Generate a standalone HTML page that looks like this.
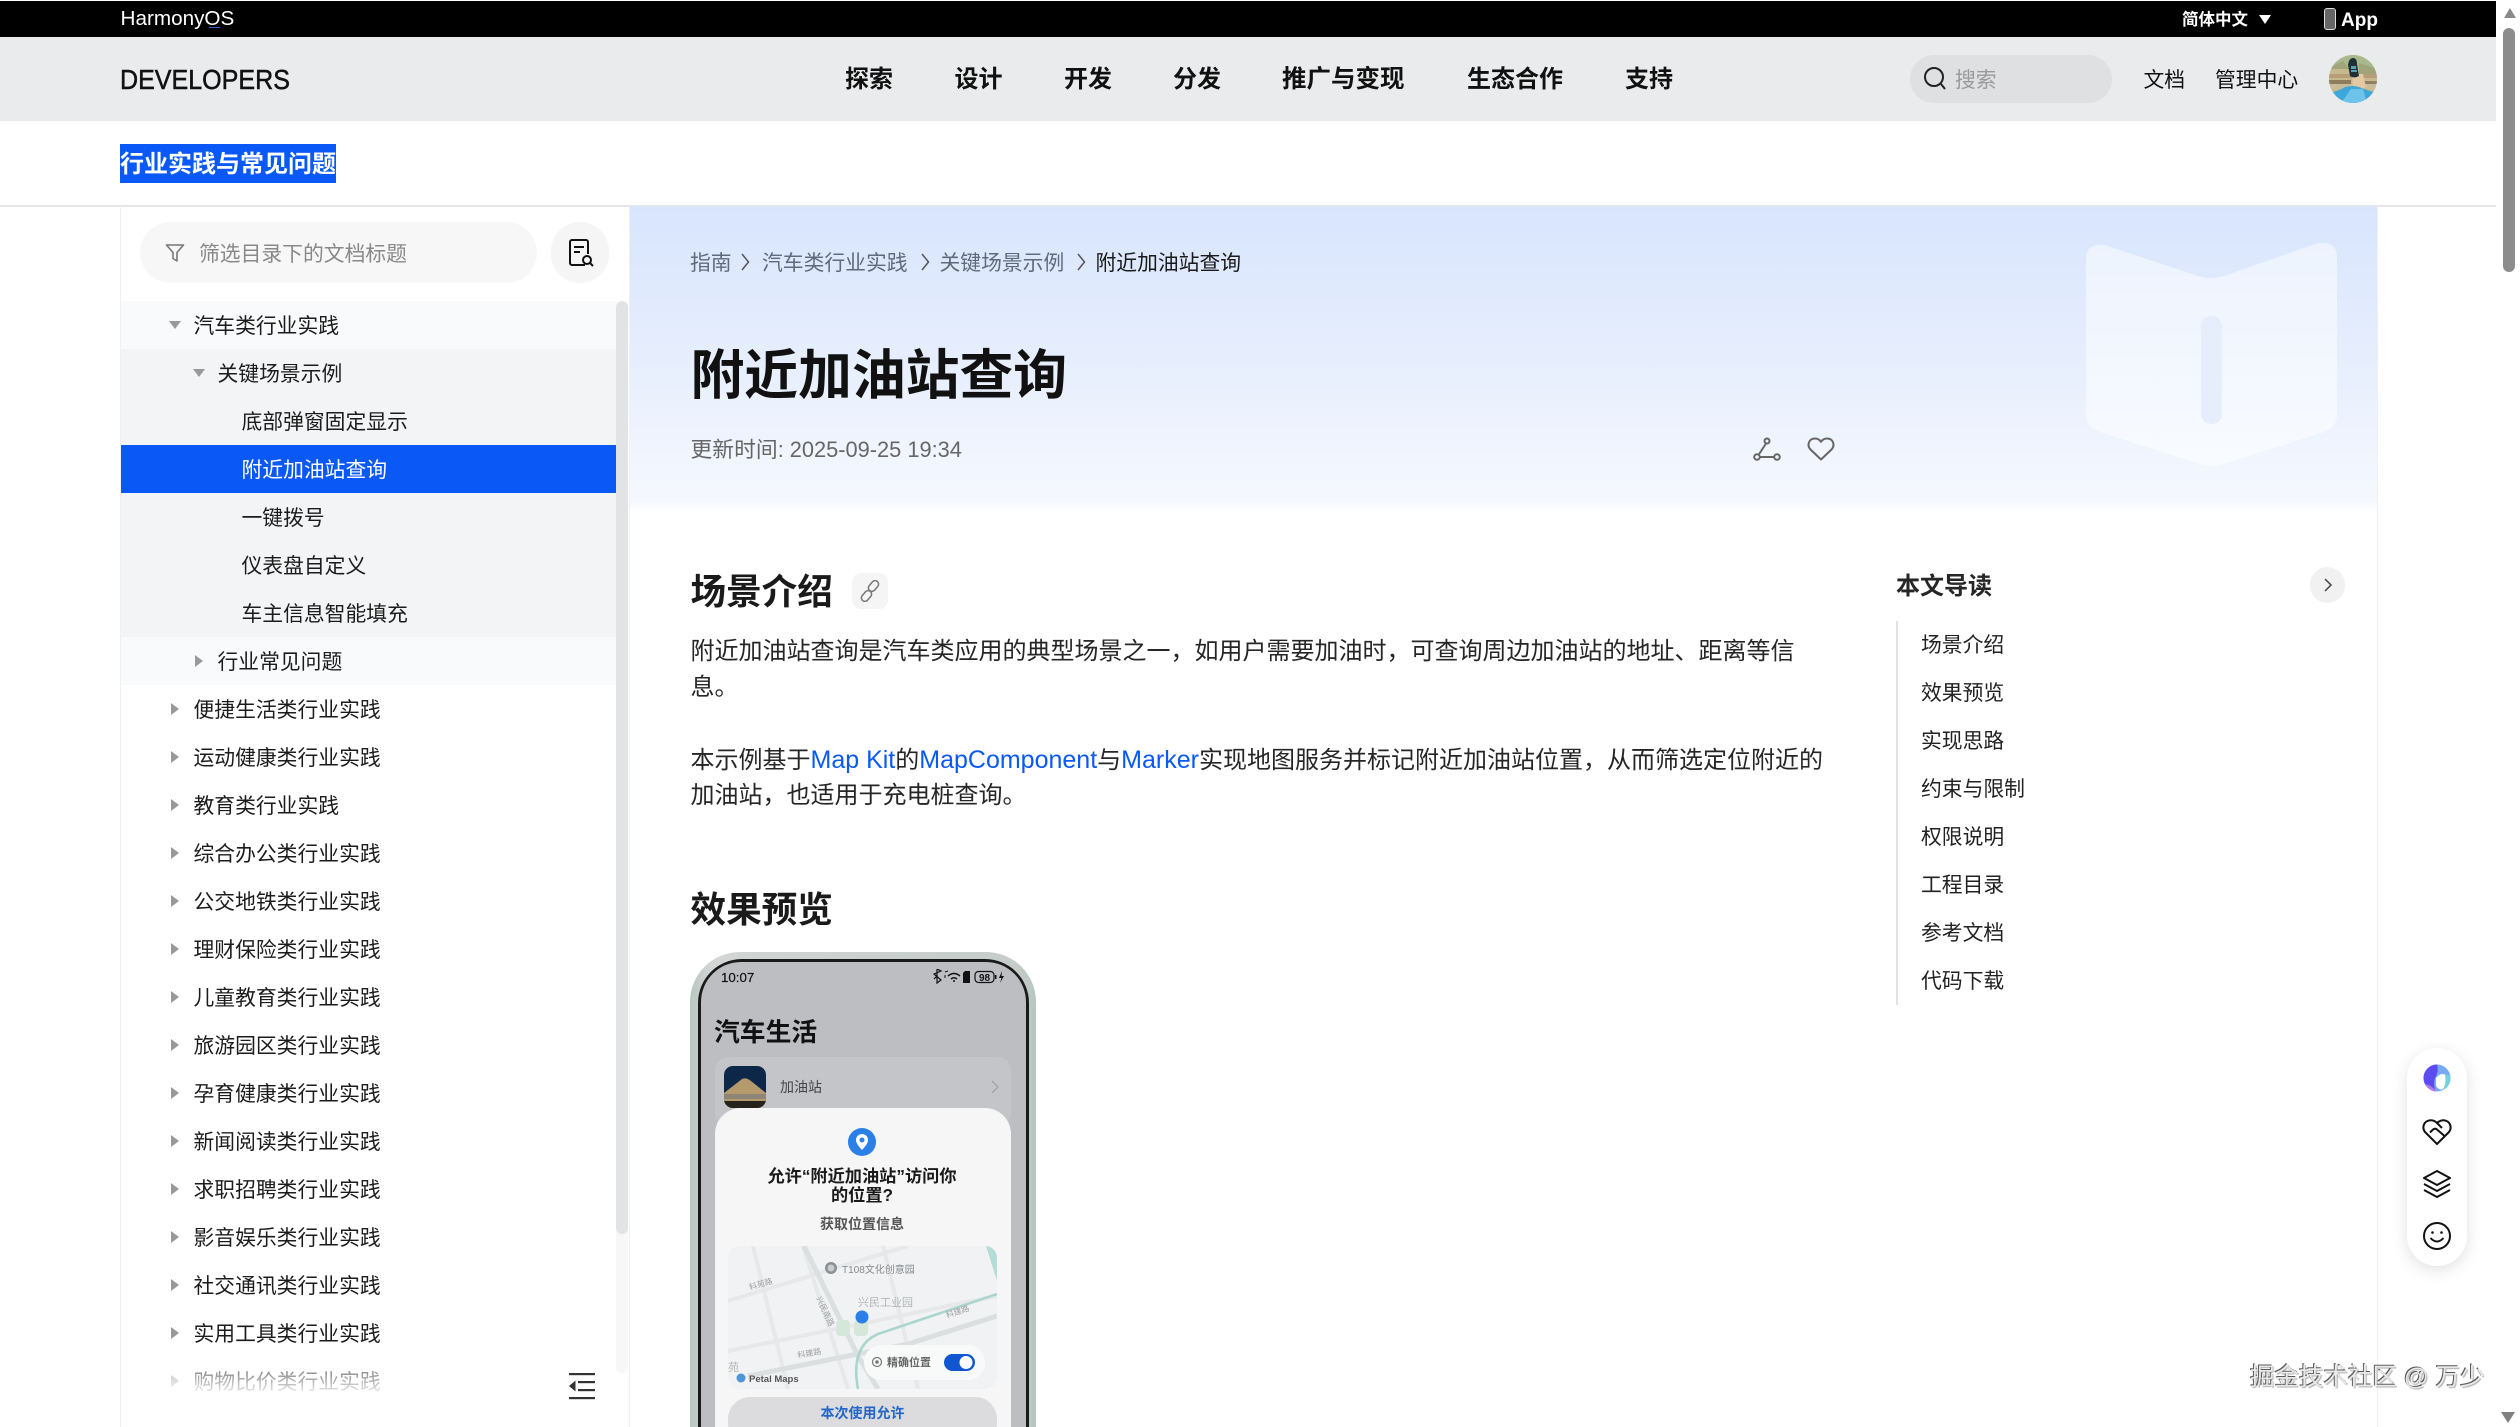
<!DOCTYPE html>
<html lang="zh-CN">
<head>
<meta charset="utf-8">
<title>附近加油站查询</title>
<style>
html,body{margin:0;padding:0;background:#fff;width:2520px;height:1427px;overflow:hidden}
body{position:relative;font-family:"Liberation Sans","Noto Sans CJK SC",sans-serif;color:#1a1a1a}
.a{position:absolute}
.t{position:absolute;white-space:nowrap;line-height:1}
.b{font-weight:700}
.nav{top:68px;font-size:24px;font-weight:700;color:#111}
.r{position:absolute;left:121px;width:495px;height:48px;line-height:48px;font-size:20.8px;color:#1c1c1c;white-space:nowrap}
.r span{position:absolute;top:1.5px}
.l1 span{left:72.5px}.l2 span{left:96.500px}.l3 span{left:120.500px}
.dn,.rt{position:absolute;width:0;height:0}
.dn{border-left:6px solid transparent;border-right:6px solid transparent;border-top:8.500px solid #999}
.rt{border-top:6.500px solid transparent;border-bottom:6.500px solid transparent;border-left:8px solid #999}
.l1 .dn{left:48px;top:20px}.l2 .dn{left:72px;top:20px}
.l1 .rt{left:50px;top:18px}.l2 .rt{left:74px;top:18px}
.toc{left:1921px;font-size:20.8px;color:#222}
.bc{top:254px;font-size:20.8px;color:#5f6b7d}
.p{left:690.500px;font-size:24px;color:#262626}
.p a{color:#0a59f7;text-decoration:none;font-size:25px}
.h2{left:690.500px;font-size:35.600px;font-weight:700;color:#1a1a1a}
</style>
</head>
<body>
<!-- top black bar -->
<div class="a" style="left:0;top:1px;width:2496px;height:36px;background:#000"></div>
<div class="t" style="left:120.500px;top:9px;font-size:20.700px;color:#fff">HarmonyOS</div>
<div class="a" style="left:209px;top:27px;width:11px;height:1px;background:#3a5fd0"></div>
<div class="t b" style="left:2182px;top:12px;font-size:16.500px;color:#fff">简体中文</div>
<div class="a" style="left:2259px;top:15px;width:0;height:0;border-left:6px solid transparent;border-right:6px solid transparent;border-top:9.500px solid #fff"></div>
<div class="a" style="left:2324px;top:8px;width:10px;height:20px;border:1.500px solid #ddd;border-radius:3px;background:#666"></div>
<div class="t b" style="left:2341px;top:11px;font-size:19px;color:#fff">App</div>

<!-- header -->
<div class="a" style="left:0;top:37px;width:2496px;height:84px;background:#e9ebec"></div>
<div class="t" style="left:120px;top:66px;font-size:28px;color:#111;transform:scaleX(.895);transform-origin:left;-webkit-text-stroke:.5px #111">DEVELOPERS</div>
<div class="t nav" style="left:845px">探索</div>
<div class="t nav" style="left:954.500px">设计</div>
<div class="t nav" style="left:1064px">开发</div>
<div class="t nav" style="left:1173px">分发</div>
<div class="t nav" style="left:1282px;font-size:24.500px">推广与变现</div>
<div class="t nav" style="left:1467px">生态合作</div>
<div class="t nav" style="left:1625px">支持</div>
<div class="a" style="left:1909.500px;top:55px;width:202.500px;height:48px;border-radius:24px;background:#dfe0e2"></div>
<svg class="a" style="left:1923px;top:66px" width="24" height="26" viewBox="0 0 24 26" fill="none" stroke="#222" stroke-width="2"><circle cx="11" cy="11" r="9"/><path d="M18 18l4 5"/></svg>
<div class="t" style="left:1955px;top:71px;font-size:20.8px;color:#9a9a9a">搜索</div>
<div class="t" style="left:2143.500px;top:71px;font-size:20.8px;color:#111">文档</div>
<div class="t" style="left:2215px;top:71px;font-size:20.8px;color:#111">管理中心</div>
<svg class="a" style="left:2329px;top:55px" width="48" height="48" viewBox="0 0 48 48">
<defs><clipPath id="av"><circle cx="24" cy="24" r="24"/></clipPath></defs>
<g clip-path="url(#av)">
<rect width="48" height="48" fill="#c6b98e"/>
<rect width="48" height="13" fill="#a9b98d"/>
<path d="M0 13L14 6 20 14H0ZM30 8L48 14V20H30Z" fill="#9fa578"/>
<rect y="19" width="48" height="4" fill="#b59e78"/>
<rect y="25" width="22" height="4" fill="#8e7c5c"/>
<rect x="32" y="26" width="16" height="3" fill="#8e8062"/>
<rect y="29" width="48" height="5" fill="#c9bb96"/>
<path d="M23 19H34L37 32Q30 36 24 33Z" fill="#e3c8a2"/>
<path d="M19 10Q20 3 24 3Q28 3 28 9L30 21Q25 24 21 21Z" fill="#1f3038"/>
<path d="M22 11h5v3h-5zM22 15h6v2h-6z" fill="#5aa0ad"/>
<path d="M0 38Q10 36 16 32Q24 30 30 32Q40 36 48 38V48H0Z" fill="#3da7dc"/>
<path d="M12 48L22 34 34 34 38 48Z" fill="#6cc4ea"/>
</g></svg>

<!-- sub header -->
<div class="a" style="left:0;top:205px;width:2496px;height:1.500px;background:#e6e6e6"></div>
<div class="a" style="left:120px;top:144px;width:216px;height:39px;background:#0a59f7"></div>
<div class="t b" style="left:120px;top:153px;font-size:24px;color:#fff">行业实践与常见问题</div>

<!-- sidebar -->
<div class="a" style="left:120px;top:206px;width:1px;height:1221px;background:#f0f0f0"></div>
<div class="a" style="left:628.500px;top:206px;width:1px;height:1221px;background:#f0f0f0"></div>
<div class="a" style="left:140px;top:222px;width:397px;height:61px;border-radius:31px;background:#f7f7f7"></div>
<svg class="a" style="left:165px;top:243px" width="20" height="20" viewBox="0 0 20 20" fill="none" stroke="#777" stroke-width="1.600" stroke-linejoin="round"><path d="M1.500 2h17l-6.500 7.500V18l-4-2.500V9.500z"/></svg>
<div class="t" style="left:199px;top:244.500px;font-size:20.8px;color:#888">筛选目录下的文档标题</div>
<div class="a" style="left:551px;top:222px;width:58px;height:61px;border-radius:30px;background:#f5f5f5"></div>
<svg class="a" style="left:568px;top:238px" width="26" height="30" viewBox="0 0 26 30" fill="none" stroke="#111" stroke-width="2"><path d="M17 27H4a2 2 0 0 1-2-2V4a2 2 0 0 1 2-2h14a2 2 0 0 1 2 2v12"/><path d="M6 9h10M6 14h6"/><circle cx="19" cy="22" r="4"/><path d="M22 25l3 3"/></svg>

<div class="a" style="left:121px;top:301px;width:495px;height:384px;background:#f9fafb"></div>
<div class="a" style="left:121px;top:349px;width:495px;height:288px;background:#f3f4f6"></div>
<div class="a" style="left:121px;top:445px;width:495px;height:48px;background:#0a59f7"></div>
<div class="a" style="left:616px;top:301px;width:12px;height:1072px;background:#f7f7f7;border-radius:6px"></div>
<div class="a" style="left:616px;top:301px;width:12px;height:933px;background:#e2e3e4;border-radius:6px"></div>

<div class="r l1" style="top:301px"><i class="dn"></i><span>汽车类行业实践</span></div>
<div class="r l2" style="top:349px"><i class="dn"></i><span>关键场景示例</span></div>
<div class="r l3" style="top:397px"><span>底部弹窗固定显示</span></div>
<div class="r l3" style="top:445px;color:#fff"><span>附近加油站查询</span></div>
<div class="r l3" style="top:493px"><span>一键拨号</span></div>
<div class="r l3" style="top:541px"><span>仪表盘自定义</span></div>
<div class="r l3" style="top:589px"><span>车主信息智能填充</span></div>
<div class="r l2" style="top:637px"><i class="rt"></i><span>行业常见问题</span></div>
<div class="r l1" style="top:685px"><i class="rt"></i><span>便捷生活类行业实践</span></div>
<div class="r l1" style="top:733px"><i class="rt"></i><span>运动健康类行业实践</span></div>
<div class="r l1" style="top:781px"><i class="rt"></i><span>教育类行业实践</span></div>
<div class="r l1" style="top:829px"><i class="rt"></i><span>综合办公类行业实践</span></div>
<div class="r l1" style="top:877px"><i class="rt"></i><span>公交地铁类行业实践</span></div>
<div class="r l1" style="top:925px"><i class="rt"></i><span>理财保险类行业实践</span></div>
<div class="r l1" style="top:973px"><i class="rt"></i><span>儿童教育类行业实践</span></div>
<div class="r l1" style="top:1021px"><i class="rt"></i><span>旅游园区类行业实践</span></div>
<div class="r l1" style="top:1069px"><i class="rt"></i><span>孕育健康类行业实践</span></div>
<div class="r l1" style="top:1117px"><i class="rt"></i><span>新闻阅读类行业实践</span></div>
<div class="r l1" style="top:1165px"><i class="rt"></i><span>求职招聘类行业实践</span></div>
<div class="r l1" style="top:1213px"><i class="rt"></i><span>影音娱乐类行业实践</span></div>
<div class="r l1" style="top:1261px"><i class="rt"></i><span>社交通讯类行业实践</span></div>
<div class="r l1" style="top:1309px"><i class="rt"></i><span>实用工具类行业实践</span></div>
<div class="r l1" style="top:1357px"><i class="rt"></i><span>购物比价类行业实践</span></div>
<div class="a" style="left:121px;top:1357px;width:495px;height:42px;background:linear-gradient(rgba(255,255,255,.25),rgba(255,255,255,.65) 55%,#fff 95%)"></div>
<svg class="a" style="left:569px;top:1373px" width="27" height="27" viewBox="0 0 27 27" fill="#333"><rect x="0" y="0" width="26" height="2.200"/><rect x="0" y="24" width="26" height="2.200"/><rect x="9" y="8" width="17" height="2.200"/><rect x="9" y="16" width="17" height="2.200"/><path d="M6.500 7.500v11L0 13z"/></svg>

<!-- hero -->
<div class="a" style="left:630px;top:206px;width:1747px;height:306px;background:linear-gradient(#d8e5fd 0,#e6eefd 150px,#f5f8fe 295px,#fff 306px)"></div>
<svg class="a" style="left:2086px;top:243px" width="251" height="224" viewBox="0 0 251 224">
<defs><linearGradient id="bk" x1="0" y1="0" x2="0" y2="1"><stop offset="0" stop-color="#edf3fe"/><stop offset="1" stop-color="#f8fbff"/></linearGradient></defs>
<path d="M0 16Q0 0 18 2L112 33Q125 37 138 33L232 0Q251 -2 251 15V172Q251 184 238 189L138 221Q125 225 113 221L14 189Q0 184 0 172Z" fill="url(#bk)"/>
<rect x="115" y="73" width="21" height="108" rx="10" fill="#e6eefc"/>
</svg>
<div class="a" style="left:2376.500px;top:206px;width:1px;height:1221px;background:#f0f0f0"></div>

<div class="t bc" style="left:690px">指南</div>
<div class="t bc" style="left:762px">汽车类行业实践</div>
<div class="t bc" style="left:939.500px">关键场景示例</div>
<div class="t bc" style="left:1095.500px;color:#1a1a1a">附近加油站查询</div>
<svg class="a" style="left:740px;top:252px" width="350" height="20" viewBox="0 0 350 20" fill="none" stroke="#555" stroke-width="1.500"><path d="M2 2l6.500 8-6.500 8M182 2l6.500 8-6.500 8M338 2l6.500 8-6.500 8"/></svg>

<div class="t b" style="left:690.500px;top:350px;font-size:53.800px;color:#111">附近加油站查询</div>
<div class="t" style="left:690.500px;top:438.500px;font-size:21.800px;color:#666">更新时间: 2025-09-25 19:34</div>
<svg class="a" style="left:1752px;top:436px" width="30" height="26" viewBox="0 0 30 26" fill="none" stroke="#666" stroke-width="2"><circle cx="15" cy="5" r="2.500"/><path d="M14 7.500L6.500 19"/><circle cx="5" cy="21" r="2.800"/><circle cx="25" cy="21" r="2.800"/><path d="M8 21h14"/></svg>
<svg class="a" style="left:1807px;top:437px" width="28" height="24" viewBox="0 0 28 24" fill="none" stroke="#666" stroke-width="2" stroke-linejoin="round"><path d="M14 22.500L3.500 12.500C-.5 8 2 1.500 8 1.500c2.700 0 4.700 1.200 6 3.300 1.300-2.100 3.300-3.300 6-3.300 6 0 8.500 6.500 4.500 11z"/></svg>

<!-- article -->
<div class="t h2" style="top:575px">场景介绍</div>
<div class="a" style="left:852px;top:573px;width:36px;height:36px;border-radius:9px;background:#f5f5f5"></div>
<svg class="a" style="left:859px;top:580px" width="22" height="22" viewBox="0 0 22 22" fill="none" stroke="#777" stroke-width="1.500"><rect x="11" y="0" width="7" height="12" rx="3.500" transform="rotate(40 14.500 6)"/><rect x="4" y="10" width="7" height="12" rx="3.500" transform="rotate(40 7.500 16)"/></svg>
<div class="t p" style="top:640px">附近加油站查询是汽车类应用的典型场景之一，如用户需要加油时，可查询周边加油站的地址、距离等信</div>
<div class="t p" style="top:676px">息。</div>
<div class="t p" style="top:747.500px">本示例基于<a>Map Kit</a>的<a>MapComponent</a>与<a>Marker</a>实现地图服务并标记附近加油站位置，从而筛选定位附近的</div>
<div class="t p" style="top:783.500px">加油站，也适用于充电桩查询。</div>
<div class="t h2" style="top:893px">效果预览</div>

<!-- phone -->
<div class="a" style="left:690px;top:952px;width:346px;height:500px;border-radius:50px 50px 0 0;background:linear-gradient(90deg,#b9c6c0,#d2d6d4 6%,#c6ccca 94%,#b9c6c0);"></div>
<div class="a" style="left:698px;top:959px;width:331px;height:494px;border-radius:44px 44px 0 0;background:#1a1a1a"></div>
<div class="a" style="left:701px;top:962px;width:325px;height:490px;border-radius:40px 40px 0 0;background:#bcbec2;overflow:hidden"></div>
<div class="t" style="left:721px;top:970.500px;font-size:13.300px;color:#111;-webkit-text-stroke:.2px #111">10:07</div>
<svg class="a" style="left:932px;top:969px" width="74" height="16" viewBox="0 0 74 16" fill="none" stroke="#111">
<path d="M5 2v12l4-3-7-6 7-3-4-2v2M2 10l3-3" stroke-width="1.200"/>
<path d="M16 7q6-5 12 0M19 10q3-2.500 6 0M21 12h2" stroke-width="1.500"/><path d="M13 3l3-1M13 6v3" stroke-width="1"/>
<path d="M31 4l2-2h5v12h-7z" fill="#111" stroke="none"/>
<rect x="43" y="2.500" width="19" height="11" rx="3.500" stroke-width="1.200"/><rect x="63" y="6" width="1.500" height="4" fill="#111" stroke="none"/>
<path d="M70 2l-3 7h2.500l-1.500 5 4-7h-2.500z" fill="#111" stroke="none"/>
<text x="52.500" y="12" font-size="10" font-weight="700" fill="#111" stroke="none" text-anchor="middle">98</text></svg>
<div class="t b" style="left:714px;top:1021px;font-size:25.800px;color:#111">汽车生活</div>
<div class="a" style="left:715px;top:1057px;width:296px;height:70px;border-radius:14px;background:#c4c5c8"></div>
<svg class="a" style="left:724px;top:1066px" width="42" height="42" viewBox="0 0 42 42"><defs><clipPath id="ic"><rect width="42" height="42" rx="9"/></clipPath></defs><g clip-path="url(#ic)"><rect width="42" height="42" fill="#0d2748"/><path d="M0 27L18 13Q22 11 27 15L42 27V42H0Z" fill="#b49a6d"/><rect y="28" width="42" height="5" fill="#8d8676"/><rect y="35" width="42" height="7" fill="#26221c"/></g></svg>
<div class="t" style="left:780px;top:1080px;font-size:14px;color:#444">加油站</div>
<svg class="a" style="left:990px;top:1079px" width="10" height="16" viewBox="0 0 10 16" fill="none" stroke="#a5a6a9" stroke-width="1.500"><path d="M2 2l6 6-6 6"/></svg>
<div class="a" style="left:715px;top:1108px;width:296px;height:340px;border-radius:26px 26px 0 0;background:#f6f6f7"></div>
<svg class="a" style="left:848px;top:1128px" width="28" height="28" viewBox="0 0 28 28"><circle cx="14" cy="14" r="14" fill="#2a80e6"/><path d="M14 22c-3-3.500-6-6.500-6-10a6 6 0 0 1 12 0c0 3.500-3 6.500-6 10z" fill="#fff"/><circle cx="14" cy="12" r="2.500" fill="#2a80e6"/></svg>
<div class="t b" style="left:742px;top:1167.500px;width:240px;text-align:center;font-size:17.200px;color:#1a1a1a">允许“附近加油站”访问你</div>
<div class="t b" style="left:742px;top:1187px;width:240px;text-align:center;font-size:17.200px;color:#1a1a1a">的位置?</div>
<div class="t" style="left:766px;top:1217px;width:192px;text-align:center;font-size:14px;font-weight:700;color:#555">获取位置信息</div>
<svg class="a" style="left:728px;top:1246px" width="269" height="143" viewBox="0 0 269 143">
<defs><clipPath id="mp"><rect width="269" height="143" rx="12"/></clipPath></defs>
<g clip-path="url(#mp)">
<rect width="269" height="143" fill="#f0f2f3"/>
<g fill="none" stroke="#e6e8e9" stroke-width="4">
<path d="M0 55L180 0"/><path d="M0 105L269 50"/><path d="M25 0L60 143"/><path d="M75 0L120 143"/><path d="M155 0L190 143"/>
</g>
<g fill="none" stroke="#dcdfe0" stroke-width="5"><path d="M76 0L130 110 L150 143"/><path d="M20 130L180 98 L269 70"/></g>
<path d="M130 143Q122 100 150 88L269 48" fill="none" stroke="#a9d5cd" stroke-width="2.500"/>
<path d="M258 0L269 35V0Z" fill="#b5dcd6"/>
<rect x="108" y="74" width="14" height="16" rx="4" fill="#d5e6db"/><rect x="126" y="74" width="14" height="16" rx="4" fill="#d5e6db"/>
<circle cx="134" cy="71" r="6.500" fill="#2a80e6"/>
<circle cx="103" cy="22" r="6" fill="#8c8f92"/><circle cx="103" cy="22" r="3.500" fill="#c9cbcd"/>
<text x="114" y="27" font-size="10" fill="#86898c">T108文化创意园</text>
<text x="130" y="60" font-size="11" fill="#b3b6b8">兴民工业园</text>
<text x="22" y="44" font-size="8" fill="#9ea1a3" transform="rotate(-16 22 44)">科苑路</text>
<text x="70" y="112" font-size="8" fill="#9ea1a3" transform="rotate(-10 70 112)">科建路</text>
<text x="219" y="72" font-size="8" fill="#9ea1a3" transform="rotate(-18 219 72)">科建路</text>
<text x="88" y="52" font-size="8" fill="#9ea1a3" transform="rotate(65 88 52)">兴民南路</text>
<text x="0" y="125" font-size="11" fill="#b3b6b8">苑</text>
<circle cx="13" cy="132" r="4.500" fill="#4b96d8"/>
<text x="21" y="136" font-size="9.500" font-weight="700" fill="#555">Petal Maps</text>
<rect x="136" y="99" width="121" height="35" rx="17" fill="#f8f9f9"/>
<circle cx="149" cy="116" r="4.500" fill="none" stroke="#777" stroke-width="1.200"/><circle cx="149" cy="116" r="1.800" fill="#777"/>
<text x="159" y="120" font-size="11" font-weight="700" fill="#666">精确位置</text>
<rect x="216" y="108" width="31" height="17" rx="8.500" fill="#0f56d0"/><circle cx="238" cy="116.500" r="6.500" fill="#fff"/>
</g></svg>
<div class="a" style="left:728px;top:1397px;width:269px;height:50px;border-radius:22px;background:#dcdcde"></div>
<div class="t b" style="left:728px;top:1406px;width:269px;text-align:center;font-size:14px;color:#2565c7">本次使用允许</div>

<!-- toc -->
<div class="t b" style="left:1896px;top:575px;font-size:24px;color:#262626">本文导读</div>
<div class="a" style="left:2310px;top:567px;width:35px;height:36px;border-radius:18px;background:#f1f1f1"></div>
<svg class="a" style="left:2322px;top:577px" width="12" height="16" viewBox="0 0 12 16" fill="none" stroke="#444" stroke-width="1.500"><path d="M3 2l6 6-6 6"/></svg>
<div class="a" style="left:1896px;top:621px;width:1.500px;height:384px;background:#e2e2e2"></div>
<div class="t toc" style="top:635.500px">场景介绍</div>
<div class="t toc" style="top:683.500px">效果预览</div>
<div class="t toc" style="top:731.500px">实现思路</div>
<div class="t toc" style="top:779.500px">约束与限制</div>
<div class="t toc" style="top:827.500px">权限说明</div>
<div class="t toc" style="top:875.500px">工程目录</div>
<div class="t toc" style="top:923.500px">参考文档</div>
<div class="t toc" style="top:971.500px">代码下载</div>

<!-- floating tools -->
<div class="a" style="left:2407px;top:1048px;width:60px;height:218px;border-radius:30px;background:#fff;box-shadow:0 4px 16px rgba(0,0,0,.12)"></div>
<svg class="a" style="left:2423px;top:1064px" width="28" height="28" viewBox="0 0 28 28"><defs><clipPath id="ai"><circle cx="14" cy="14" r="13.500"/></clipPath></defs><g clip-path="url(#ai)"><rect width="28" height="28" fill="#78a9f5"/><path d="M0 0H14Q16 8 12 14Q10 20 13 28H0Z" fill="#5b4bf0"/><path d="M0 20Q8 20 14 28H0Z" fill="#b07ae8"/><path d="M13 14Q18 8 23 11V24Q17 28 13 22Z" fill="#fff"/><path d="M22 11H28V24L18 27Q24 22 22 11Z" fill="#72d0de"/></g></svg>
<svg class="a" style="left:2422px;top:1119px" width="30" height="26" viewBox="0 0 30 26" fill="none" stroke="#111" stroke-width="2" stroke-linejoin="round"><path d="M15 25L3.500 13.500C0 10 1 3.500 6 1.800 10 .5 13 2 15 4c2-2 5.500-3.500 9-2.200 5 1.700 6 8.200 2.500 11.700z"/><path d="M22.500 17L15 10.500c-1.500-1.300-3-1-4.500.5L8 13.500M15 4L20 9"/></svg>
<svg class="a" style="left:2423px;top:1170px" width="28" height="28" viewBox="0 0 28 28" fill="none" stroke="#111" stroke-width="2" stroke-linejoin="round"><path d="M14 1L27 8 14 15 1 8z"/><path d="M1 14l13 7 13-7M1 20l13 7 13-7"/></svg>
<svg class="a" style="left:2423px;top:1222px" width="28" height="28" viewBox="0 0 28 28" fill="none" stroke="#111" stroke-width="2"><circle cx="14" cy="14" r="13"/><path d="M7.500 16q6.500 7 13 0"/><circle cx="9.500" cy="10.500" r="1.300" fill="#111" stroke="none"/><circle cx="18.500" cy="10.500" r="1.300" fill="#111" stroke="none"/></svg>

<!-- watermark -->
<div class="t" style="left:2250px;top:1366px;font-size:24.500px;color:#e8e8e8;text-shadow:-1px -1px 0 #5a5a5a,1px 1px 1px #b0b0b0">掘金技术社区 @ 万少</div>

<!-- page scrollbar -->
<div class="a" style="left:2504px;top:8px;width:0;height:0;border-left:6px solid transparent;border-right:6px solid transparent;border-bottom:10px solid #8a8a8a"></div>
<div class="a" style="left:2503px;top:28px;width:12px;height:244px;border-radius:6px;background:#8c8c8c"></div>
<div class="a" style="left:2501px;top:1412px;width:0;height:0;border-left:7px solid transparent;border-right:7px solid transparent;border-top:11px solid #808080"></div>
</body>
</html>
